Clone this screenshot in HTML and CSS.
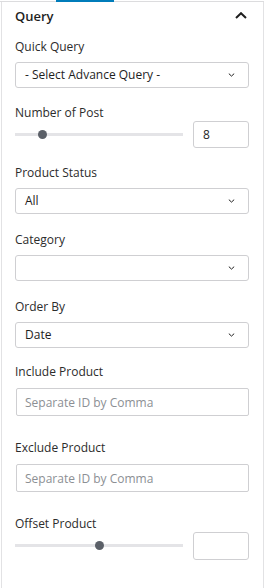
FILE: index.html
```html
<!DOCTYPE html>
<html>
<head>
<meta charset="utf-8">
<link rel="stylesheet" href="styles.css">
</head>
<body>
<div class="tabbar"><div class="tab-active"></div></div>
<div class="panel">
  <div class="header">
    <span class="title">Query</span>
    <svg class="chev-up" width="12" height="7" viewBox="0 0 12 7"><path d="M1 6L6 1.2L11 6" fill="none" stroke="#1e1e1e" stroke-width="2"/></svg>
  </div>
  <div class="fields">
    <div class="field f-first">
      <div class="label">Quick Query</div>
      <div class="select"><span>- Select Advance Query -</span><svg class="chev" width="7" height="4" viewBox="0 0 7 4"><path d="M0.8 0.6L3.5 3.1L6.2 0.6" fill="none" stroke="#1e1e1e" stroke-width="1"/></svg></div>
    </div>
    <div class="field">
      <div class="label">Number of Post</div>
      <div class="range-row">
        <div class="slider"><div class="track"></div><div class="thumb" style="left:16.5%"></div></div>
        <div class="num">8</div>
      </div>
    </div>
    <div class="field">
      <div class="label">Product Status</div>
      <div class="select"><span>All</span><svg class="chev" width="7" height="4" viewBox="0 0 7 4"><path d="M0.8 0.6L3.5 3.1L6.2 0.6" fill="none" stroke="#1e1e1e" stroke-width="1"/></svg></div>
    </div>
    <div class="field f-cat">
      <div class="label">Category</div>
      <div class="select"><span></span><svg class="chev" width="7" height="4" viewBox="0 0 7 4"><path d="M0.8 0.6L3.5 3.1L6.2 0.6" fill="none" stroke="#1e1e1e" stroke-width="1"/></svg></div>
    </div>
    <div class="field f-order">
      <div class="label">Order By</div>
      <div class="select"><span>Date</span><svg class="chev" width="7" height="4" viewBox="0 0 7 4"><path d="M0.8 0.6L3.5 3.1L6.2 0.6" fill="none" stroke="#1e1e1e" stroke-width="1"/></svg></div>
    </div>
    <div class="field f-text">
      <div class="label">Include Product</div>
      <div class="text-input">Separate ID by Comma</div>
    </div>
    <div class="field f-text2">
      <div class="label">Exclude Product</div>
      <div class="text-input">Separate ID by Comma</div>
    </div>
    <div class="field f-text2">
      <div class="label">Offset Product</div>
      <div class="range-row">
        <div class="slider"><div class="track"></div><div class="thumb" style="left:50%"></div></div>
        <div class="num num-tall"></div>
      </div>
    </div>
  </div>
</div>
</body>
</html>
```

FILE: styles.css
```css
* { box-sizing: border-box; }
html, body { margin: 0; padding: 0; background: #fff; }
body {
  width: 264px;
  height: 588px;
  overflow: hidden;
  font-family: "Open Sans", "Noto Sans", sans-serif;
  font-size: 12px;
  color: #1e1e1e;
}
.tabbar {
  height: 2px;
  background: linear-gradient(to bottom, transparent 1px, #dcdcde 1px);
}
.tab-active {
  margin-left: 56px;
  width: 58px;
  height: 2px;
  background: #007cba;
}
.panel {
  margin-left: 1px;
  width: 263px;
  height: 586px;
  border-left: 1px solid #e2e2e4;
  border-right: 1px solid #e2e2e4;
  padding: 6px 0 0 13px;
}
.header {
  display: flex;
  justify-content: space-between;
  align-items: center;
  height: 16px;
  padding-right: 16px;
}
.title {
  font-size: 13px;
  line-height: 16px;
  font-weight: 600;
}
.chev-up { display: block; margin-top: -1px; }
.fields { display: flex; flex-direction: column; width: 234px; }
.field { margin-top: 17px; }
.f-first { margin-top: 15px; }
.f-cat { margin-top: 17.5px; }
.f-order { margin-top: 18px; }
.f-text { margin-top: 16px; }
.f-text2 { margin-top: 24px; }
.label {
  line-height: 16px;
  font-size: 12px;
  margin-bottom: 7px;
  color: #2c2c2c;
}
.f-cat .label { margin-bottom: 7.5px; }
.f-text .label, .f-text2 .label { margin-bottom: 8px; }
.field:has(.range-row) .label { margin-bottom: 0; }
.select {
  height: 26px;
  border: 1px solid #cfcfd2;
  border-radius: 3px;
  display: flex;
  align-items: center;
  justify-content: space-between;
  padding: 0 13px 0 9px;
  line-height: 16px;
}
.chev { display: block; }
.text-input {
  margin-left: 1px;
  height: 28px;
  border: 1px solid #cfcfd2;
  border-radius: 2px;
  display: flex;
  align-items: center;
  padding-left: 8px;
  color: #8c8f94;
}
.range-row {
  display: flex;
  align-items: center;
  justify-content: space-between;
  height: 27px;
}
.slider {
  position: relative;
  width: 168px;
  height: 9px;
}
.track {
  position: absolute;
  left: 0; right: 0; top: 3px;
  height: 3px;
  background: #e4e4e7;
}
.thumb {
  position: absolute;
  top: 0;
  width: 9px;
  height: 9px;
  margin-left: -4.5px;
  border-radius: 50%;
  background: #5b6068;
}
.num {
  width: 56px;
  height: 27px;
  border: 1px solid #cfcfd2;
  border-radius: 3px;
  padding-left: 9px;
  line-height: 25px;
  font-size: 12px;
}
.num-tall { height: 28px; }
```
